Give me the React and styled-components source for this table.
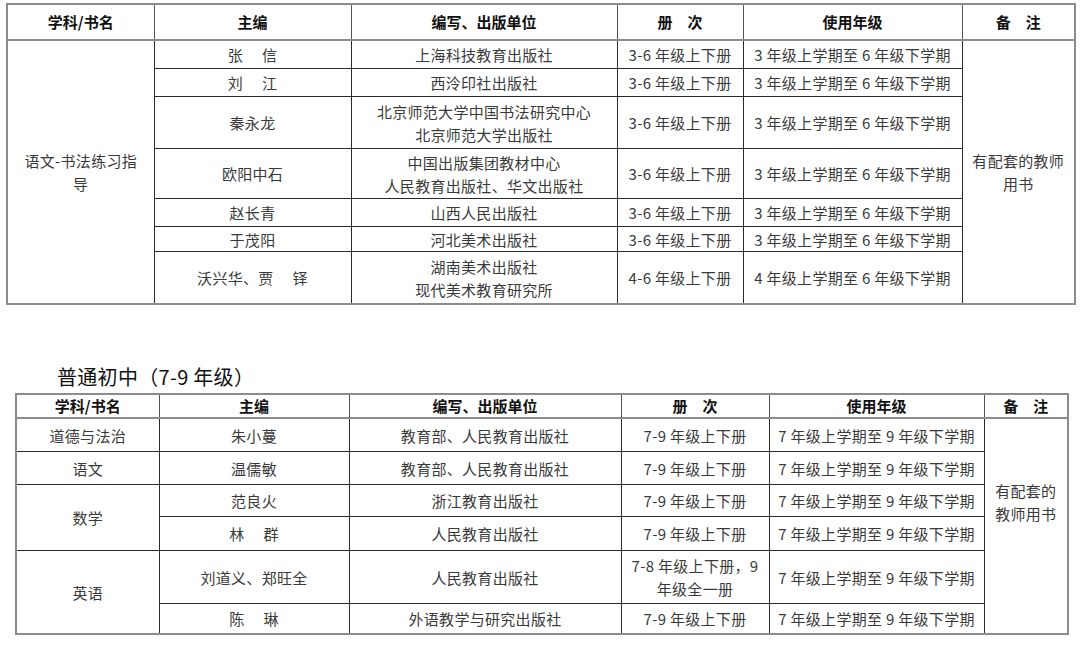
import styled, { createGlobalStyle } from 'styled-components';

const GlobalStyle = createGlobalStyle`
  html, body {
    margin: 0;
    padding: 0;
    background: #ffffff;
  }
  body {
    font-family: "Noto Sans CJK SC", "Liberation Sans", sans-serif;
    color: #333;
  }
`;

const Page = styled.div`
  width: 1080px;
  height: 649px;
  overflow: hidden;
  padding-top: 3px;
  box-sizing: border-box;
`;

const Table = styled.table`
  border-collapse: collapse;
  table-layout: fixed;
  width: ${(p) => p.$width}px;
  margin-left: ${(p) => p.$left}px;
  border: 2px solid #8c8c8c;
  font-size: 15px;
  line-height: 23px;
`;

const Col = styled.col`
  width: ${(p) => p.$w}px;
`;

const HeadCell = styled.th`
  height: ${(p) => p.$h}px;
  padding: 0;
  font-weight: 700;
  font-size: 15px;
  line-height: 20px;
  color: #111;
  text-align: center;
  vertical-align: middle;
  border: 1px solid #555;
  border-bottom: 2px solid #8c8c8c;
  white-space: pre;
`;

const Cell = styled.td`
  height: ${(p) => p.$h || 0}px;
  padding: ${(p) => (p.$lift ? `0 0 ${p.$lift}px 0` : '0')};
  text-align: center;
  vertical-align: middle;
  color: #3a3a3a;
  border: 1px solid #2a2a2a;
  white-space: pre;
  letter-spacing: 0.3px;
`;

const Heading = styled.h2`
  margin: 59px 0 3px 57px;
  font-size: 20px;
  font-weight: 400;
  line-height: 26px;
  color: #111;
  letter-spacing: 0.3px;
`;

const primaryCols = [147, 197, 266, 126, 219, 113];
const juniorCols = [143, 190, 272, 148, 215, 84];

const primaryRows = [
  { h: 27, editor: '张\u3000 信', press: ['上海科技教育出版社'], vol: '3-6 年级上下册', grade: '3 年级上学期至 6 年级下学期' },
  { h: 27, editor: '刘\u3000 江', press: ['西泠印社出版社'], vol: '3-6 年级上下册', grade: '3 年级上学期至 6 年级下学期' },
  { h: 51, editor: '秦永龙', press: ['北京师范大学中国书法研究中心', '北京师范大学出版社'], vol: '3-6 年级上下册', grade: '3 年级上学期至 6 年级下学期' },
  { h: 49, editor: '欧阳中石', press: ['中国出版集团教材中心', '人民教育出版社、华文出版社'], vol: '3-6 年级上下册', grade: '3 年级上学期至 6 年级下学期' },
  { h: 27, editor: '赵长青', press: ['山西人民出版社'], vol: '3-6 年级上下册', grade: '3 年级上学期至 6 年级下学期' },
  { h: 24, editor: '于茂阳', press: ['河北美术出版社'], vol: '3-6 年级上下册', grade: '3 年级上学期至 6 年级下学期' },
  { h: 51, editor: '沃兴华、贾\u3000 铎', press: ['湖南美术出版社', '现代美术教育研究所'], vol: '4-6 年级上下册', grade: '4 年级上学期至 6 年级下学期' },
];

const juniorRows = [
  { h: 32, subject: '道德与法治', span: 1, editor: '朱小蔓', press: '教育部、人民教育出版社', vol: ['7-9 年级上下册'] },
  { h: 32, subject: '语文', span: 1, editor: '温儒敏', press: '教育部、人民教育出版社', vol: ['7-9 年级上下册'] },
  { h: 31, subject: '数学', span: 2, editor: '范良火', press: '浙江教育出版社', vol: ['7-9 年级上下册'] },
  { h: 33, editor: '林\u3000 群', press: '人民教育出版社', vol: ['7-9 年级上下册'] },
  { h: 52, subject: '英语', span: 2, editor: '刘道义、郑旺全', press: '人民教育出版社', vol: ['7-8 年级上下册，9', '年级全一册'] },
  { h: 29, editor: '陈\u3000 琳', press: '外语教学与研究出版社', vol: ['7-9 年级上下册'] },
];

function Lines({ items }) {
  return items.map((line, i) => (
    <span key={line}>
      {i > 0 && <br />}
      {line}
    </span>
  ));
}

function Columns({ widths }) {
  return (
    <colgroup>
      {widths.map((w, i) => (
        <Col key={i} $w={w} />
      ))}
    </colgroup>
  );
}

function HeaderRow({ h }) {
  return (
    <tr>
      <HeadCell $h={h}>学科/书名</HeadCell>
      <HeadCell $h={h}>主编</HeadCell>
      <HeadCell $h={h}>编写、出版单位</HeadCell>
      <HeadCell $h={h}>册{'\u3000'}次</HeadCell>
      <HeadCell $h={h}>使用年级</HeadCell>
      <HeadCell $h={h}>备{'\u3000'}注</HeadCell>
    </tr>
  );
}

export default function App() {
  return (
    <Page>
      <GlobalStyle />
      <Table $width={1068} $left={6}>
        <Columns widths={primaryCols} />
        <thead>
          <HeaderRow h={34} />
        </thead>
        <tbody>
          {primaryRows.map((row, i) => (
            <tr key={row.editor}>
              {i === 0 && (
                <Cell rowSpan={primaryRows.length}>
                  语文-书法练习指
                  <br />导
                </Cell>
              )}
              <Cell $h={row.h}>{row.editor}</Cell>
              <Cell>
                <Lines items={row.press} />
              </Cell>
              <Cell>{row.vol}</Cell>
              <Cell>{row.grade}</Cell>
              {i === 0 && (
                <Cell rowSpan={primaryRows.length}>
                  有配套的教师
                  <br />用书
                </Cell>
              )}
            </tr>
          ))}
        </tbody>
      </Table>

      <Heading>普通初中（7-9 年级）</Heading>

      <Table $width={1052} $left={15}>
        <Columns widths={juniorCols} />
        <thead>
          <HeaderRow h={22} />
        </thead>
        <tbody>
          {juniorRows.map((row, i) => (
            <tr key={row.editor}>
              {row.subject && <Cell rowSpan={row.span}>{row.subject}</Cell>}
              <Cell $h={row.h}>{row.editor}</Cell>
              <Cell>{row.press}</Cell>
              <Cell>
                <Lines items={row.vol} />
              </Cell>
              <Cell>7 年级上学期至 9 年级下学期</Cell>
              {i === 0 && (
                <Cell rowSpan={juniorRows.length} $lift={48}>
                  有配套的
                  <br />
                  教师用书
                </Cell>
              )}
            </tr>
          ))}
        </tbody>
      </Table>
    </Page>
  );
}
